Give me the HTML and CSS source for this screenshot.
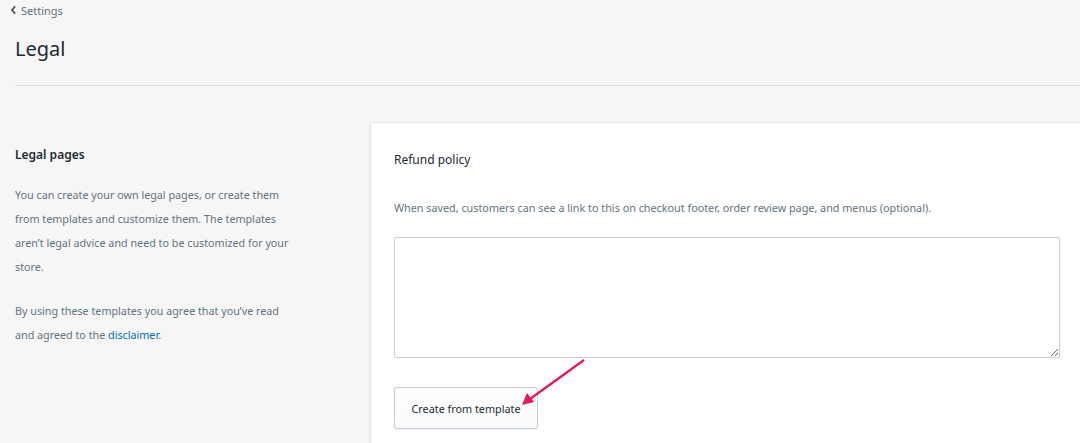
FILE: index.html
```
<!DOCTYPE html>
<html>
<head>
	<title>Legal</title>
	<link rel="stylesheet" href="styles.css">
</head>
<body>
	<div class="top">
		<a class="crumb" href="#">
			<svg width="7" height="10" viewBox="0 0 7 10"><path d="M5.2 1.2 L2 5 L5.2 8.8" fill="none" stroke="#454f5b" stroke-width="1.7"/></svg>
			Settings
		</a>
		<h1 class="title">Legal</h1>
		<div class="line"></div>
	</div>

	<div class="layout">
		<div class="side">
			<h2>Legal pages</h2>
			<p>You can create your own legal pages, or create them from templates and customize them. The templates aren’t legal advice and need to be customized for your store.</p>
			<p>By using these templates you agree that you’ve read and agreed to the <a href="#">disclaimer</a>.</p>
		</div>
		<div class="card">
			<h3>Refund policy</h3>
			<p class="hint">When saved, customers can see a link to this on checkout footer, order review page, and menus (optional).</p>
			<textarea class="policy"></textarea>
			<button class="btn">Create from template</button>
		</div>
	</div>

	<!-- annotation arrow -->
	<svg class="arrow" width="80" height="60" viewBox="0 0 80 60">
		<path d="M70 4 L16 43" stroke="#e8175d" stroke-width="2.2" fill="none"/>
		<path d="M8 49 L13 37 L20 46 Z" fill="#e8175d"/>
	</svg>
</body>
</html>
```

FILE: styles.css
```
*{
	margin: 0;
	padding: 0;
	box-sizing: border-box;
}
body{
	background: #f6f6f7;
	font-family: "Noto Sans", "Liberation Sans", sans-serif;
	color: #212b36;
	width: 1080px;
	height: 443px;
	overflow: hidden;
	position: relative;
}
.top{
	padding: 2px 0 0 10px;
}
.crumb{
	display: flex;
	align-items: center;
	gap: 4px;
	font-size: 11px;
	color: #637381;
	text-decoration: none;
	height: 16px;
}
.title{
	font-size: 20px;
	font-weight: 400;
	color: #212b36;
	margin: 18px 0 0 5px;
	line-height: 26px;
}
.line{
	margin: 23px 0 0 5px;
	border-top: 1px solid #dfe3e8;
}
.layout{
	display: flex;
	margin-top: 37px;
}
.side{
	width: 371px;
	padding: 24px 0 0 15px;
}
.side h2{
	font-size: 12px;
	font-weight: 600;
	color: #212b36;
	line-height: 16px;
}
.side p{
	font-size: 10.75px;
	color: #637381;
	line-height: 24px;
	width: 285px;
	margin-top: 20px;
}
.side p + p{
	margin-top: 20px;
}
.side a{
	color: #006fbb;
	text-decoration: none;
}
.card{
	flex: 1;
	background: #fff;
	height: 340px;
	padding: 29px 20px 0 23px;
	box-shadow: 0 0 0 1px rgba(63,63,68,0.05), 0 1px 3px 0 rgba(63,63,68,0.15);
}
.card h3{
	font-size: 12px;
	font-weight: 400;
	color: #212b36;
	line-height: 16px;
}
.hint{
	font-size: 10.8px;
	color: #637381;
	line-height: 16px;
	margin-top: 32px;
}
.policy{
	display: block;
	width: 100%;
	height: 121px;
	margin-top: 21px;
	border: 1px solid #c4cdd5;
	border-radius: 2px;
	resize: vertical;
	background: #fff;
}
.btn{
	display: block;
	margin-top: 29px;
	width: 144px;
	height: 42px;
	font-family: inherit;
	font-size: 10.8px;
	color: #212b36;
	background: linear-gradient(#fff, #f9fafb);
	border: 1px solid #c4cdd5;
	border-radius: 3px;
	box-shadow: 0 1px 0 rgba(22,29,37,0.05);
}
.arrow{
	position: absolute;
	left: 514px;
	top: 356px;
}
```
